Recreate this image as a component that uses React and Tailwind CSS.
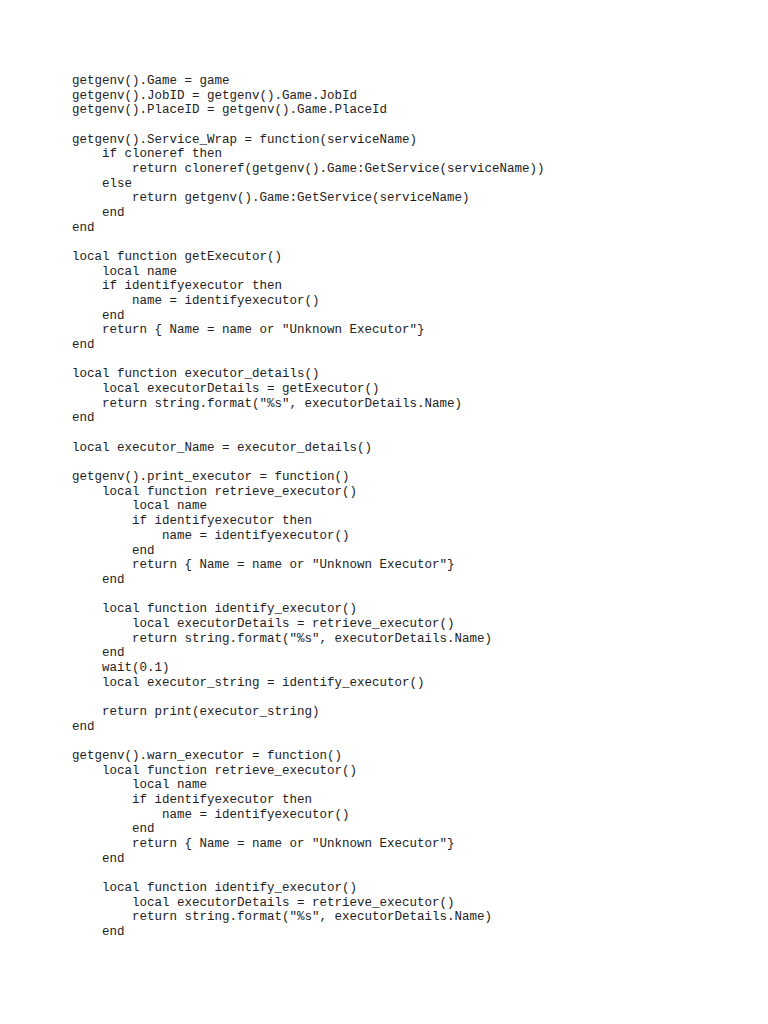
const code = `getgenv().Game = game
getgenv().JobID = getgenv().Game.JobId
getgenv().PlaceID = getgenv().Game.PlaceId

getgenv().Service_Wrap = function(serviceName)
    if cloneref then
        return cloneref(getgenv().Game:GetService(serviceName))
    else
        return getgenv().Game:GetService(serviceName)
    end
end

local function getExecutor()
    local name
    if identifyexecutor then
        name = identifyexecutor()
    end
    return { Name = name or "Unknown Executor"}
end

local function executor_details()
    local executorDetails = getExecutor()
    return string.format("%s", executorDetails.Name)
end

local executor_Name = executor_details()

getgenv().print_executor = function()
    local function retrieve_executor()
        local name
        if identifyexecutor then
            name = identifyexecutor()
        end
        return { Name = name or "Unknown Executor"}
    end

    local function identify_executor()
        local executorDetails = retrieve_executor()
        return string.format("%s", executorDetails.Name)
    end
    wait(0.1)
    local executor_string = identify_executor()

    return print(executor_string)
end

getgenv().warn_executor = function()
    local function retrieve_executor()
        local name
        if identifyexecutor then
            name = identifyexecutor()
        end
        return { Name = name or "Unknown Executor"}
    end

    local function identify_executor()
        local executorDetails = retrieve_executor()
        return string.format("%s", executorDetails.Name)
    end`;

export default function App() {
  return (
    <div className="w-[768px] h-[1024px] bg-white overflow-hidden">
      <pre
        className="m-0 pt-[74px] pl-[72px] text-[12.5px] leading-[14.67px] text-[#222]"
        style={{ fontFamily: '"Liberation Mono", monospace' }}
      >
        {code}
      </pre>
    </div>
  );
}
